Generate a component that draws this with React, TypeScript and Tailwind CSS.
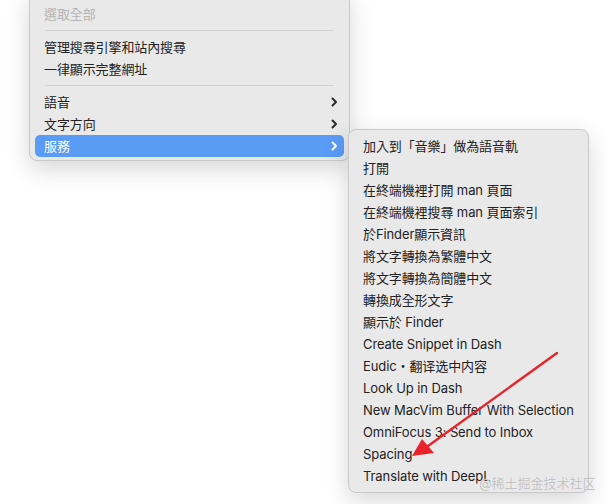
import React from 'react'

const font = "font-['Inter','Noto_Sans_CJK_TC',sans-serif]"

type RowProps = {
  label: string
  sub?: boolean
  active?: boolean
  disabled?: boolean
}

const Chevron = ({ white }: { white?: boolean }) => (
  <svg width="8" height="12" viewBox="0 0 8 12" className="shrink-0">
    <polyline
      points="2.5,2.5 6,6 2.5,9.5"
      fill="none"
      stroke={white ? '#ffffff' : '#2a2a2a'}
      strokeWidth="2"
      strokeLinecap="round"
      strokeLinejoin="round"
    />
  </svg>
)

const Row = ({ label, sub, active, disabled }: RowProps) => (
  <div
    className={`flex h-[22px] items-center justify-between whitespace-nowrap rounded-[5px] pl-[9px] pr-[6px] text-[13px] leading-none tracking-[-0.1px] ${
      active ? 'bg-[#5a9bf6] text-white' : disabled ? 'text-[#b4b4b4]' : 'text-[#222222]'
    }`}
  >
    <span>{label}</span>
    {sub && <Chevron white={active} />}
  </div>
)

const Sep = () => (
  <div className="flex h-[11px] items-center px-[10px]">
    <div className="h-px w-full bg-[#d2d2d2]" />
  </div>
)

const services = [
  '加入到「音樂」做為語音軌',
  '打開',
  '在終端機裡打開 man 頁面',
  '在終端機裡搜尋 man 頁面索引',
  '於Finder顯示資訊',
  '將文字轉換為繁體中文',
  '將文字轉換為簡體中文',
  '轉換成全形文字',
  '顯示於 Finder',
  'Create Snippet in Dash',
  'Eudic・翻译选中内容',
  'Look Up in Dash',
  'New MacVim Buffer With Selection',
  'OmniFocus 3: Send to Inbox',
  'Spacing',
  'Translate with DeepL',
]

export default function App() {
  return (
    <div className={`relative h-[504px] w-[607px] overflow-hidden bg-white ${font}`}>
      {/* main context menu */}
      <div className="ml-[29px] -mt-[10px] w-[321px] rounded-[8px] border border-[#c9c9c9] bg-[#e9e9e9] px-[5px] pt-[12px] pb-[3px] shadow-[0_8px_24px_rgba(0,0,0,0.16)]">
        <Row label="選取全部" disabled />
        <Sep />
        <Row label="管理搜尋引擎和站內搜尋" />
        <Row label="一律顯示完整網址" />
        <Sep />
        <Row label="語音" sub />
        <Row label="文字方向" sub />
        <Row label="服務" sub active />
      </div>

      {/* services submenu */}
      <div className="absolute left-[348px] top-[129px] w-[241px] rounded-[8px] border border-[#c9c9c9] bg-[#e9e9e9] px-[5px] py-[5px] shadow-[0_8px_24px_rgba(0,0,0,0.16)]">
        {services.map((s) => (
          <Row key={s} label={s} />
        ))}
      </div>

      {/* annotation arrow */}
      <svg className="absolute left-0 top-0" width="607" height="504" viewBox="0 0 607 504">
        <line x1="557" y1="353" x2="428" y2="446" stroke="#e8232a" strokeWidth="2.4" strokeLinecap="round" />
        <polygon points="412,456 422,439 434,453" fill="#e8232a" />
      </svg>

      {/* watermark */}
      <div className="absolute left-[479px] top-[477px] whitespace-nowrap text-[13px] leading-none text-[#c2c2c2] [text-shadow:0_0_1px_rgba(255,255,255,0.9)]">
        @稀土掘金技术社区
      </div>
    </div>
  )
}
